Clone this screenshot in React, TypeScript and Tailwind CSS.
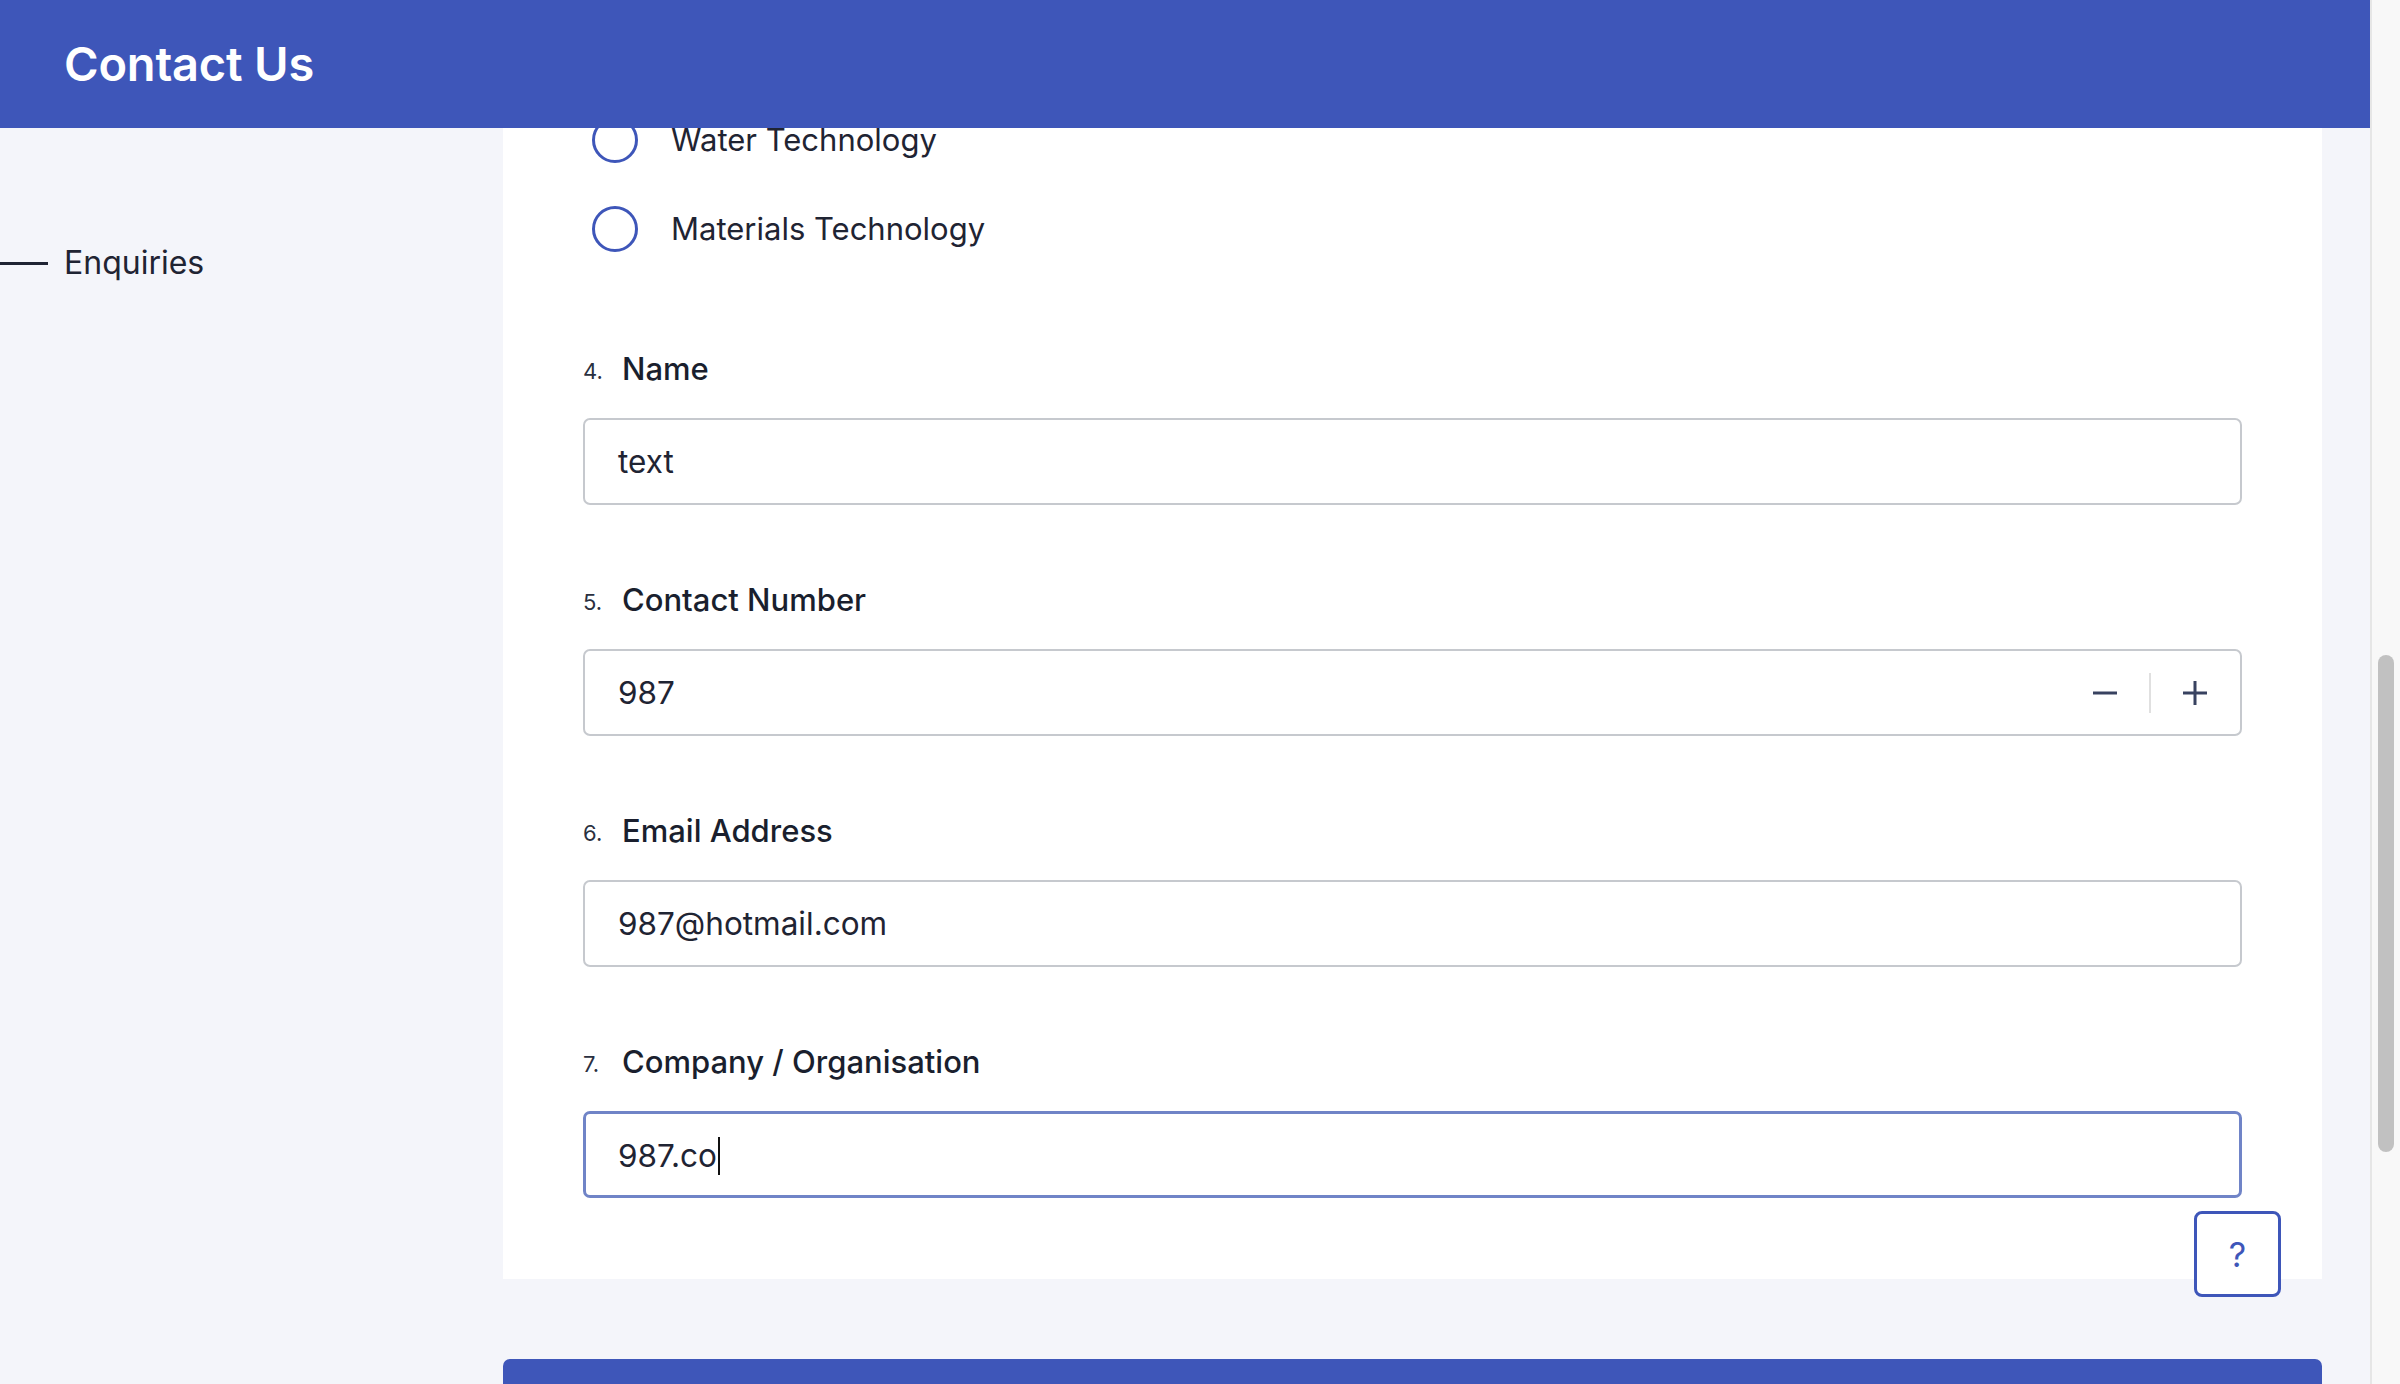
const BLUE = "bg-[#3e56b9]"

function Radio({ label }: { label: string }) {
  return (
    <div className="flex h-[46px] items-center gap-[33px] ml-[9px]">
      <span className="h-[46px] w-[46px] shrink-0 rounded-full border-[3px] border-[#3e56b9]" />
      <span className="text-[31px] leading-[40px] text-[#1f2433]">{label}</span>
    </div>
  )
}

function Label({ num, text }: { num: number; text: string }) {
  return (
    <div className="flex h-[40px] items-center">
      <span className="w-[39px] pt-[4px] text-[22px] text-[#2a3040]">{num}.</span>
      <span className="text-[31px] font-medium leading-[40px] text-[#1a1f2e]">{text}</span>
    </div>
  )
}

function Field({ value, focused, stepper }: { value: string; focused?: boolean; stepper?: boolean }) {
  return (
    <div
      className={
        focused
          ? "mt-[29px] flex h-[87px] items-center rounded-[7px] border-[3px] border-[#7084c7] pl-[32px] pr-[32px]"
          : "mt-[29px] flex h-[87px] items-center rounded-[7px] border-2 border-[#c6c9ce] pl-[33px] pr-[33px]"
      }
    >
      <span className="flex-1 text-[31.5px] text-[#1f2433]">
        {value}
        {focused && <span className="ml-[1px] inline-block h-[38px] w-[2px] translate-y-[8px] bg-[#111]" />}
      </span>
      {stepper && (
        <div className="flex items-center gap-[32px]">
          <svg width="24" height="24" viewBox="0 0 24 24">
            <path d="M0 12h24" stroke="#384260" strokeWidth="3" />
          </svg>
          <span className="h-[40px] w-[2px] bg-[#e0e0e0]" />
          <svg width="24" height="24" viewBox="0 0 24 24">
            <path d="M0 12h24M12 0v24" stroke="#384260" strokeWidth="3" />
          </svg>
        </div>
      )}
    </div>
  )
}

export default function App() {
  return (
    <div className="flex h-[1384px] w-full overflow-hidden font-['Inter',sans-serif]">
      <div className="relative flex-1 overflow-hidden bg-[#f4f5fa]">
        <header className={`absolute left-0 top-0 z-10 flex h-[128px] w-full items-center pl-[64px] ${BLUE}`}>
          <h1 className="text-[47px] font-semibold tracking-[-0.2px] text-white">Contact Us</h1>
        </header>

        <div className="flex">
          <aside className="w-[503px] shrink-0 pt-[243px]">
            <div className="flex h-[40px] items-center gap-[16px]">
              <span className="h-[3px] w-[48px] bg-[#1f2433]" />
              <span className="text-[32px] text-[#1f2433]">Enquiries</span>
            </div>
          </aside>

          <div className="w-[1819px] shrink-0">
            <section className="relative bg-white px-[80px] pb-[81px] pt-[117px]">
              <div className="flex flex-col gap-[43px]">
                <Radio label="Water Technology" />
                <Radio label="Materials Technology" />
              </div>

              <div className="mt-[97px]">
                <Label num={4} text="Name" />
                <Field value="text" />
              </div>
              <div className="mt-[75px]">
                <Label num={5} text="Contact Number" />
                <Field value="987" stepper />
              </div>
              <div className="mt-[75px]">
                <Label num={6} text="Email Address" />
                <Field value="987@hotmail.com" />
              </div>
              <div className="mt-[75px]">
                <Label num={7} text="Company / Organisation" />
                <Field value="987.co" focused />
              </div>

              <button className="absolute bottom-[-18px] right-[41px] flex h-[86px] w-[87px] items-center justify-center rounded-[8px] border-[3px] border-[#3e56b9] bg-white text-[34px] text-[#3e56b9]">
                ?
              </button>
            </section>

            <div className={`mt-[80px] h-[60px] rounded-t-[7px] ${BLUE}`} />
          </div>
        </div>
      </div>

      <div className="relative w-[30px] shrink-0 border-l-2 border-[#e6e6e6] bg-[#f8f8f8]">
        <div className="absolute left-[6px] top-[655px] h-[497px] w-[16px] rounded-full bg-[#c1c1c1]" />
      </div>
    </div>
  )
}
